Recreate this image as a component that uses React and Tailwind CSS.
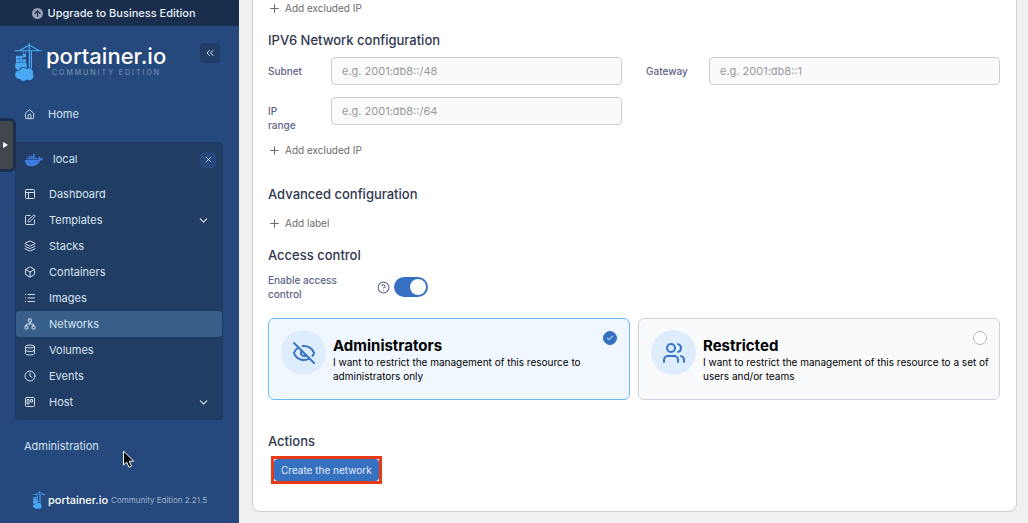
import { SiPortainer } from "react-icons/si";
import { FaDocker } from "react-icons/fa";
import {
  ArrowUp, Box, Check, ChevronDown, ChevronsLeft, CircleHelp, Clock, Database, EyeOff,
  House, Layers, List, Network, PanelsTopLeft, Plus, SquarePen, Trello, Users, X,
} from "lucide-react";

const environmentLinks = [
  { name: "Dashboard", Icon: PanelsTopLeft },
  { name: "Templates", Icon: SquarePen, expandable: true },
  { name: "Stacks", Icon: Layers },
  { name: "Containers", Icon: Box },
  { name: "Images", Icon: List },
  { name: "Networks", Icon: Network, active: true },
  { name: "Volumes", Icon: Database },
  { name: "Events", Icon: Clock },
  { name: "Host", Icon: Trello, expandable: true },
];

function SidebarLink({ name, Icon, expandable, active }) {
  return (
    <li>
      <a
        href="#"
        aria-current={active ? "page" : undefined}
        className={`flex h-[26px] items-center rounded pr-3 pl-2 ${active ? "bg-[#375f89]" : ""}`}
      >
        <Icon size={12} className="mr-[13px] shrink-0 text-[#d3deea]" />
        <span className="flex-1">{name}</span>
        {expandable && <ChevronDown size={13} />}
      </a>
    </li>
  );
}

function Sidebar() {
  return (
    <aside className="flex w-[239px] shrink-0 flex-col bg-[#25497c] text-[11px] text-[#d5e3f1]">
      <button className="flex h-[26px] items-center justify-center gap-[5px] bg-[#192d4c] pr-3 text-[11px] font-medium text-[#e8eef5]">
        <span className="flex size-[11px] items-center justify-center rounded-full bg-[#9a9fb5] text-[#192d4c]">
          <ArrowUp size={9} strokeWidth={3} />
        </span>
        Upgrade to Business Edition
      </button>

      <div className="flex items-start pt-[17px] pr-[19px] pl-[9px]">
        <SiPortainer size={38} className="text-[#4aa9f5]" />
        <div className="-ml-px flex-1">
          <div className="text-[22px] leading-[26px] font-medium text-white">portainer.io</div>
          <div className="pl-[6px] text-[7px] leading-[8px] tracking-[2px] text-[#8296b4]">COMMUNITY EDITION</div>
        </div>
        <button aria-label="Collapse sidebar" className="flex size-5 items-center justify-center rounded bg-[#213d66]">
          <ChevronsLeft size={12} />
        </button>
      </div>

      <nav className="pt-5 pr-4 pl-[15px]">
        <a href="#" className="flex h-[26px] items-center pl-[9px]">
          <House size={11} className="mr-[13px]" />
          Home
        </a>
        <div className="mt-[15px] rounded border border-dotted border-[#1e3860] bg-[#223d63] pb-1">
          <div className="mb-[5px] flex h-[33px] items-center pr-[6px] pl-[9px]">
            <FaDocker size={18} className="mr-[10px] text-[#3d7be0]" />
            <span className="flex-1">local</span>
            <button aria-label="Close environment" className="flex size-4 items-center justify-center rounded-sm bg-[#25497c]">
              <X size={9} />
            </button>
          </div>
          <ul>
            {environmentLinks.map((link) => (
              <SidebarLink key={link.name} {...link} />
            ))}
          </ul>
        </div>
        <a href="#" className="mt-[13px] flex h-[26px] items-center pl-[9px]">Administration</a>
      </nav>

      <footer className="mt-auto flex items-center pb-[14px] pl-[30px]">
        <SiPortainer size={18} className="text-[#4aa9f5]" />
        <span className="mr-[3px] text-[11px] font-medium text-white">portainer.io</span>
        <span className="text-[8px] text-[#9fb3cd]">Community Edition 2.21.5</span>
      </footer>
    </aside>
  );
}

function SectionTitle({ children }) {
  return <h2 className="text-[13px] leading-5 font-medium text-[#30374f]">{children}</h2>;
}

function AddButton({ children }) {
  return (
    <button type="button" className="flex h-4 items-center gap-1 text-[10px] text-[#6b6b6b]">
      <Plus size={13} />
      {children}
    </button>
  );
}

function TextField({ id, label, placeholder }) {
  return (
    <div className="flex">
      <label htmlFor={id} className="w-[63px] shrink-0 pt-[7px] pr-6 text-[10px] leading-[14px] font-medium text-[#5d6485]">
        {label}
      </label>
      <input
        id={id}
        type="text"
        placeholder={placeholder}
        className="h-7 min-w-0 flex-1 rounded border border-[#cccccc] bg-[#f9fafb] px-[10px] text-[11px] placeholder:text-[#999999]"
      />
    </div>
  );
}

function AccessOption({ Icon, title, text, selected }) {
  return (
    <label
      className={`relative flex min-h-[82px] items-start rounded-md border py-[11px] pr-2 pl-3 ${
        selected ? "border-[#6db9f2] bg-[#f0f7ff]" : "border-[#cfd1dc] bg-[#f9fafb]"
      }`}
    >
      <span className="mr-[7px] flex size-[45px] shrink-0 items-center justify-center rounded-full bg-[#deedfd] text-[#3874c5]">
        <Icon size={24} />
      </span>
      <span className="flex-1 pt-[7px] text-black">
        <span className="block text-[15px] leading-[18px] font-bold">{title}</span>
        <span className="block text-[10px] leading-[14px]">{text}</span>
      </span>
      <span className="absolute top-3 right-3 flex size-[14px]">
        <input
          type="radio"
          name="access"
          defaultChecked={selected}
          className="peer size-[14px] appearance-none rounded-full border border-[#b3b6c8] bg-white checked:border-[#3570c1] checked:bg-[#3570c1]"
        />
        <Check size={8} strokeWidth={3} className="absolute top-[3px] left-[3px] hidden text-white peer-checked:block" />
      </span>
    </label>
  );
}

export default function App() {
  return (
    <div className="relative flex min-h-screen bg-[#f0f0f0] font-['Inter',sans-serif]">
      <Sidebar />

      <main className="flex min-w-0 flex-1 flex-col pr-[11px] pb-[11px] pl-[13px]">
        <form className="flex-1 rounded-b-lg border border-t-0 border-[#cdd0de] bg-white pr-4 pl-[15px]">
          <AddButton>Add excluded IP</AddButton>

          <div className="pt-[14px]">
            <SectionTitle>IPV6 Network configuration</SectionTitle>
          </div>
          <div className="grid grid-cols-2 gap-x-6 gap-y-3 pt-[7px]">
            <TextField id="subnet" label="Subnet" placeholder="e.g. 2001:db8::/48" />
            <TextField id="gateway" label="Gateway" placeholder="e.g. 2001:db8::1" />
            <TextField id="range" label="IP range" placeholder="e.g. 2001:db8::/64" />
          </div>
          <div className="pt-[10px]">
            <AddButton>Add excluded IP</AddButton>
          </div>

          <div className="pt-[26px]">
            <SectionTitle>Advanced configuration</SectionTitle>
          </div>
          <div className="pt-[11px]">
            <AddButton>Add label</AddButton>
          </div>

          <div className="pt-[14px]">
            <SectionTitle>Access control</SectionTitle>
          </div>
          <div className="flex items-center pt-2">
            <label htmlFor="access-control" className="w-[109px] pr-6 text-[10px] leading-[14px] font-medium text-[#5d6485]">
              Enable access control
            </label>
            <CircleHelp size={13} className="mr-1 text-[#5d6485]" />
            <input
              id="access-control"
              type="checkbox"
              role="switch"
              defaultChecked
              className="flex h-5 w-[34px] appearance-none items-center rounded-full bg-[#b3b6c8] px-[2px] before:size-4 before:rounded-full before:bg-white checked:justify-end checked:bg-[#3570c1]"
            />
          </div>

          <div className="grid grid-cols-2 gap-2 pt-[17px]">
            <AccessOption
              Icon={EyeOff}
              title="Administrators"
              text="I want to restrict the management of this resource to administrators only"
              selected
            />
            <AccessOption
              Icon={Users}
              title="Restricted"
              text="I want to restrict the management of this resource to a set of users and/or teams"
            />
          </div>

          <div className="pt-[31px]">
            <SectionTitle>Actions</SectionTitle>
          </div>
          <div className="mt-[5px] ml-[3px] inline-flex border-[3px] border-[#e93a17]">
            <button type="button" className="h-[22px] rounded bg-[#3570c1] px-[7px] text-[10px] text-[#e3edf8]">
              Create the network
            </button>
          </div>
        </form>
      </main>

      <button
        aria-label="Open panel"
        className="absolute top-[118px] left-0 flex h-[54px] w-4 items-center rounded-r-md border-y-[3px] border-r-[3px] border-[#1b3050] bg-[#42474e] pl-[2px]"
      >
        <svg width="7" height="8" viewBox="0 0 7 8" fill="#ffffff"><path d="M1 1l5 3-5 3z" /></svg>
      </button>
      <svg className="absolute top-[450px] left-[122px]" width="13" height="19" viewBox="0 0 13 19" aria-hidden="true">
        <path d="M1.500 1v14l3.200-2.900 2.300 5.200 2.500-1.100-2.300-5h4.500z" fill="#000" stroke="#fff" strokeWidth="1" />
      </svg>
    </div>
  );
}
